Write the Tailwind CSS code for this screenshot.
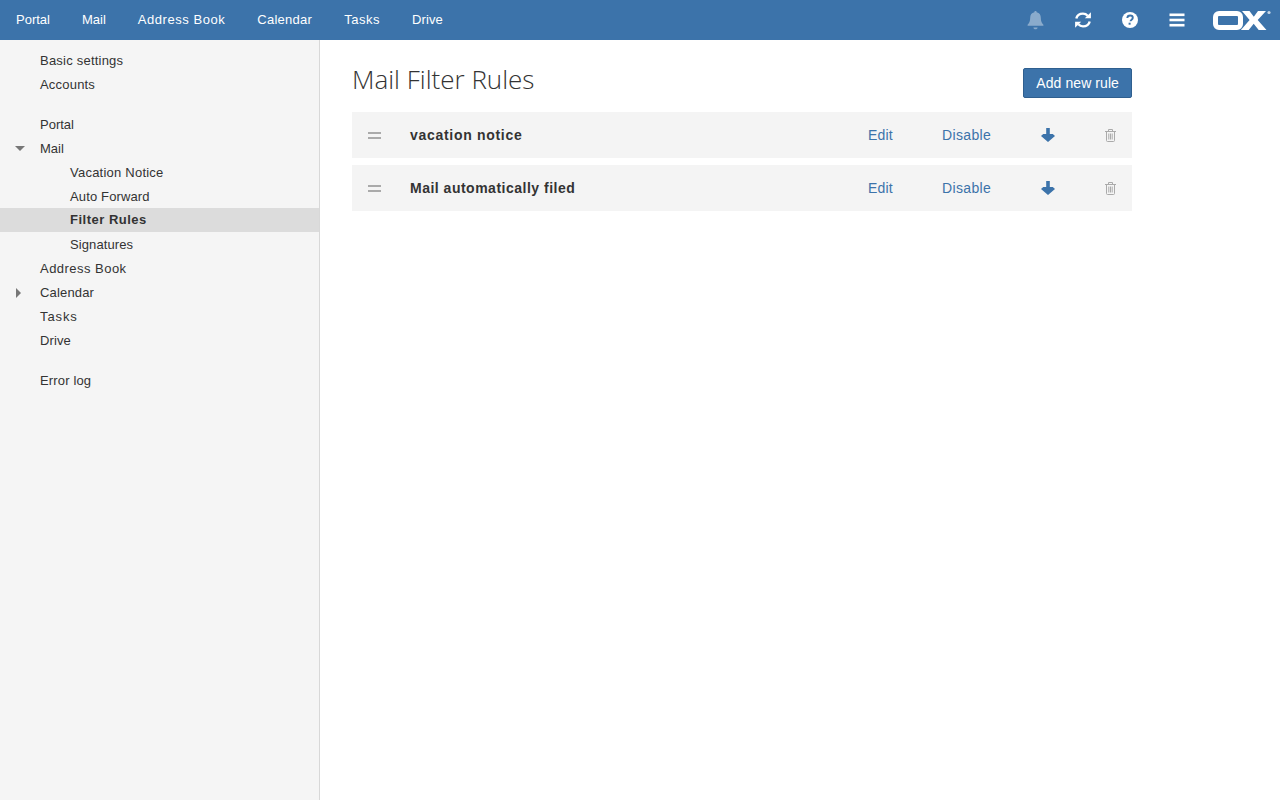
<!DOCTYPE html>
<html>
<head>
<meta charset="utf-8">
<script src="https://cdn.jsdelivr.net/npm/@tailwindcss/browser@4"></script>
</head>
<body class="h-[800px] w-[1280px] overflow-hidden bg-white font-['Liberation_Sans',sans-serif] text-[13px] text-[#333]">
<header class="flex h-10 items-center justify-between bg-[#3c73aa] text-white">
  <nav class="flex items-center gap-8 pl-4">
    <span>Portal</span><span>Mail</span><span class="tracking-[0.55px]">Address Book</span><span class="tracking-[0.25px]">Calendar</span><span class="tracking-[0.55px]">Tasks</span><span class="tracking-[0.1px]">Drive</span>
  </nav>
  <div class="flex items-center">
    <svg class="mr-[29px] h-[20px] w-[19px] opacity-40" viewBox="0 0 18 18" fill="#fff"><path d="M9 0.5c.7 0 1.100.5 1.100 1.200 2.600.5 3.900 2.500 3.900 5 0 3.500 1 5.300 2.500 6.800v1H1.500v-1C3 12 4 10.200 4 6.700c0-2.500 1.300-4.500 3.900-5C7.900 1 8.300.5 9 .5zM7 16h4c0 1-.9 1.700-2 1.700S7 17 7 16z"/></svg>
    <svg class="mr-[29px] h-[18px] w-[18px]" viewBox="0 0 18 18" fill="none" stroke="#fff" stroke-width="2.400"><path d="M2.300 7.500C3 4.500 5.600 2.600 9 2.600c1.900 0 3.500.8 4.700 2.100"/><path d="M15.700 10.500c-.7 3-3.300 4.900-6.700 4.900-1.900 0-3.500-.8-4.700-2.100"/><path fill="#fff" stroke="none" d="M16.900 1.200v6.100h-6.100zM1.100 16.800v-6.100h6.100z"/></svg>
    <svg class="mr-[29px] h-[18px] w-[18px]" viewBox="0 0 18 18"><circle cx="9" cy="9" r="8" fill="#fff"/><path d="M6.300 7c.1-1.700 1.300-2.500 2.800-2.500 1.600 0 2.700.9 2.700 2.200 0 2-2.300 1.900-2.300 3.600" fill="none" stroke="#3c73aa" stroke-width="1.900"/><rect x="7.600" y="11.700" width="2" height="2" fill="#3c73aa"/></svg>
    <svg class="mr-[27px] h-[18px] w-[18px]" viewBox="0 0 18 18" fill="#fff"><rect x="1.500" y="2.500" width="15" height="2.600"/><rect x="1.500" y="7.700" width="15" height="2.600"/><rect x="1.500" y="12.900" width="15" height="2.600"/></svg>
    <svg class="mr-[9px] h-[20px] w-[58px]" viewBox="0 0 58 20"><rect x="2.500" y="3.500" width="25" height="14" rx="3.500" fill="none" stroke="#fff" stroke-width="5"/><path fill="#fff" d="M29 1h7.500l4.300 5.700L45 1h8l-8.300 9 8.800 10h-7.800l-5-6.200-5 6.200h-7.800l8.700-10z"/><circle cx="56" cy="2.500" r="1.600" fill="#fff" opacity=".7"/></svg>
  </div>
</header>
<div class="flex h-[760px]">
  <aside class="w-[320px] shrink-0 border-r border-[#d8d8d8] bg-[#f5f5f5] pt-2 text-[#333]">
    <div class="flex h-6 items-center pl-10 pt-[2px] tracking-[0.22px]">Basic settings</div>
    <div class="flex h-6 items-center pl-10 pt-[2px] tracking-[0.2px]">Accounts</div>
    <div class="h-4"></div>
    <div class="flex h-6 items-center pl-10 pt-[2px]">Portal</div>
    <div class="relative flex h-6 items-center pl-10 pt-[2px]"><span class="absolute left-[15px] top-[10px] h-0 w-0 border-x-[5px] border-t-[5px] border-x-transparent border-t-[#777]"></span>Mail</div>
    <div class="flex h-6 items-center pl-[70px] pt-[2px] tracking-[0.23px]">Vacation Notice</div>
    <div class="flex h-6 items-center pl-[70px] pt-[2px] tracking-[0.14px]">Auto Forward</div>
    <div class="flex h-6 items-center bg-[#dcdcdc] pl-[70px] font-bold tracking-[0.5px]">Filter Rules</div>
    <div class="flex h-6 items-center pl-[70px] pt-[2px] tracking-[0.1px]">Signatures</div>
    <div class="flex h-6 items-center pl-10 pt-[2px] tracking-[0.47px]">Address Book</div>
    <div class="relative flex h-6 items-center pl-10 pt-[2px] tracking-[0.17px]"><span class="absolute left-4 top-[8px] h-0 w-0 border-y-[5px] border-l-[5px] border-y-transparent border-l-[#777]"></span>Calendar</div>
    <div class="flex h-6 items-center pl-10 pt-[2px] tracking-[0.9px]">Tasks</div>
    <div class="flex h-6 items-center pl-10 pt-[2px] tracking-[0.1px]">Drive</div>
    <div class="h-4"></div>
    <div class="flex h-6 items-center pl-10 pt-[2px] tracking-[0.15px]">Error log</div>
  </aside>
  <main class="w-[844px] pl-8 pt-5">
    <div class="flex h-[52px] w-[780px] items-start justify-between">
      <h1 class="-mt-px font-['Open_Sans',sans-serif] text-[26px] font-light leading-10 text-[#333]">Mail Filter Rules</h1>
      <button class="mt-2 h-[30px] rounded-[2px] border border-[#2f5f8f] bg-[#3c73aa] px-3 text-sm tracking-[0.08px] text-white">Add new rule</button>
    </div>
    <div class="flex w-[780px] flex-col gap-[7px]">
      <div class="relative flex h-[46px] items-center bg-[#f4f4f4] text-sm">
        <div class="ml-4 h-[7px] w-[13px] border-y-2 border-[#aaa]"></div>
        <div class="ml-[29px] text-sm font-bold tracking-[0.7px]">vacation notice</div>
        <div class="absolute left-[516px] text-[#3c73aa] tracking-[0.2px]">Edit</div>
        <div class="absolute left-[590px] text-[#3c73aa] tracking-[0.35px]">Disable</div>
        <svg class="absolute left-[689px] top-[16px] h-[14px] w-[14px]" viewBox="0 0 14 14" fill="#3c73aa"><path d="M5.200 0h3.600v6h3L14 7.900 7 14 0 7.900 2.200 6h3z"/></svg>
        <svg class="absolute left-[752px] h-[14px] w-[13px]" viewBox="0 0 13 14" fill="none" stroke="#aaa"><path d="M1 3.500h11M2.500 3.500v9a1 1 0 0 0 1 1h6a1 1 0 0 0 1-1v-9M4.500 3.500V1.500h4v2M4.800 5.500v6M6.500 5.500v6M8.200 5.500v6"/></svg>
      </div>
      <div class="relative flex h-[46px] items-center bg-[#f4f4f4] text-sm">
        <div class="ml-4 h-[7px] w-[13px] border-y-2 border-[#aaa]"></div>
        <div class="ml-[29px] text-sm font-bold tracking-[0.5px]">Mail automatically filed</div>
        <div class="absolute left-[516px] text-[#3c73aa] tracking-[0.2px]">Edit</div>
        <div class="absolute left-[590px] text-[#3c73aa] tracking-[0.35px]">Disable</div>
        <svg class="absolute left-[689px] top-[16px] h-[14px] w-[14px]" viewBox="0 0 14 14" fill="#3c73aa"><path d="M5.200 0h3.600v6h3L14 7.900 7 14 0 7.900 2.200 6h3z"/></svg>
        <svg class="absolute left-[752px] h-[14px] w-[13px]" viewBox="0 0 13 14" fill="none" stroke="#aaa"><path d="M1 3.500h11M2.500 3.500v9a1 1 0 0 0 1 1h6a1 1 0 0 0 1-1v-9M4.500 3.500V1.500h4v2M4.800 5.500v6M6.500 5.500v6M8.200 5.500v6"/></svg>
      </div>
    </div>
  </main>
</div>
</body>
</html>
